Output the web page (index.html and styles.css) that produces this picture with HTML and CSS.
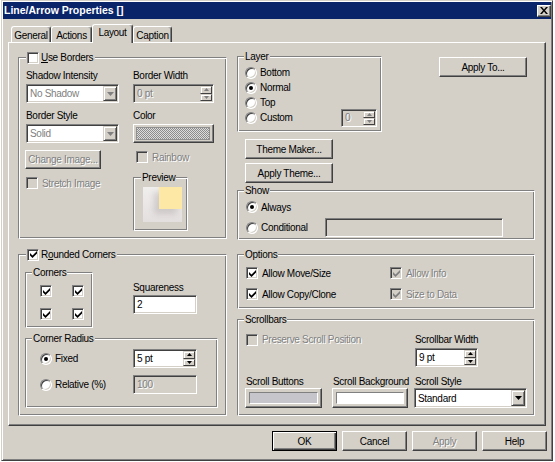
FILE: index.html
```html
<!DOCTYPE html>
<html>
<head>
<meta charset="utf-8">
<link rel="stylesheet" href="styles.css">
</head>
<body>
<div class="dialog">
  <div class="titlebar">
    <span class="title">Line/Arrow Properties []</span>
    <span class="close"><svg width="8" height="7" viewBox="0 0 8 7"><path d="M0 0h2l2 2.4L6 0h2L5 3.5 8 7H6L4 4.6 2 7H0l3-3.5z"/></svg></span>
  </div>
  <div class="tabs">
    <div class="tab tab-general">General</div>
    <div class="tab tab-actions">Actions</div>
    <div class="tab tab-layout sel">Layout</div>
    <div class="tab tab-caption">Caption</div>
  </div>
  <div class="panel">
    <div class="col-left">
      <div class="group g-borders">
        <div class="legend legend-chk"><span class="chk"></span><span><u>U</u>se Borders</span></div>
        <div class="gb-col1">
          <div class="lbl">Shadow Intensity</div>
          <div class="field combo w93 mt2 dis"><span class="val">No Shadow</span><span class="dd"><svg width="7" height="4" viewBox="0 0 7 4"><path d="M0 0h7L3.5 4z"/></svg></span></div>
          <div class="lbl mt6">Border Style</div>
          <div class="field combo w93 mt2 dis"><span class="val">Solid</span><span class="dd"><svg width="7" height="4" viewBox="0 0 7 4"><path d="M0 0h7L3.5 4z"/></svg></span></div>
          <div class="btn btn-change dis">Change Image...</div>
          <div class="cbrow cb-stretch dis"><span class="chk"></span>Stretch Image</div>
        </div>
        <div class="gb-col2">
          <div class="lbl">Border Width</div>
          <div class="field gray w81 mt2 dis"><span class="val">0 pt</span><span class="spinbtns"><span class="sb"><svg width="5" height="3" viewBox="0 0 5 3"><path d="M2.5 0L5 3H0z"/></svg></span><span class="sb"><svg width="5" height="3" viewBox="0 0 5 3"><path d="M0 0h5L2.5 3z"/></svg></span></span></div>
          <div class="lbl mt6">Color</div>
          <div class="btn colorbtn mt2"><span class="hatch"></span></div>
          <div class="cbrow cb-rainbow dis"><span class="chk"></span>Rainbow</div>
          <div class="group g-preview">
            <div class="legend">Preview</div>
            <div class="pv"><div class="pv-fill"></div></div>
          </div>
        </div>
      </div>

      <div class="group g-rounded">
        <div class="legend legend-chk"><span class="chk"><svg width="7" height="7" viewBox="0 0 7 7"><path d="M0 2l2.5 2.5L7 0v2.5L2.5 7 0 4.5z"/></svg></span><span>R<u>o</u>unded Corners</span></div>
        <div class="rc-top">
          <div class="group g-corners">
            <div class="legend">Corners</div>
            <div class="corner-grid">
              <span class="chk"><svg width="7" height="7" viewBox="0 0 7 7"><path d="M0 2l2.5 2.5L7 0v2.5L2.5 7 0 4.5z"/></svg></span>
              <span class="chk"><svg width="7" height="7" viewBox="0 0 7 7"><path d="M0 2l2.5 2.5L7 0v2.5L2.5 7 0 4.5z"/></svg></span>
              <span class="chk"><svg width="7" height="7" viewBox="0 0 7 7"><path d="M0 2l2.5 2.5L7 0v2.5L2.5 7 0 4.5z"/></svg></span>
              <span class="chk"><svg width="7" height="7" viewBox="0 0 7 7"><path d="M0 2l2.5 2.5L7 0v2.5L2.5 7 0 4.5z"/></svg></span>
            </div>
          </div>
          <div class="sq">
            <div class="lbl">Squareness</div>
            <div class="field w64 mt1"><span class="val">2</span></div>
          </div>
        </div>
        <div class="group g-radius">
          <div class="legend">Corner Radius</div>
          <div class="radius-grid">
            <div class="rrow"><span class="radio on"></span>Fixed</div>
            <div class="field w64"><span class="val">5 pt</span><span class="spinbtns"><span class="sb"><svg width="5" height="3" viewBox="0 0 5 3"><path d="M2.5 0L5 3H0z"/></svg></span><span class="sb"><svg width="5" height="3" viewBox="0 0 5 3"><path d="M0 0h5L2.5 3z"/></svg></span></span></div>
            <div class="rrow"><span class="radio"></span>Relative (%)</div>
            <div class="field gray w64 dis"><span class="val">100</span></div>
          </div>
        </div>
      </div>
    </div>

    <div class="col-right">
      <div class="rt-row">
        <div class="group g-layer">
          <div class="legend">Layer</div>
          <div class="rrow lrow"><span class="radio"></span>Bottom</div>
          <div class="rrow lrow"><span class="radio on"></span>Normal</div>
          <div class="rrow lrow"><span class="radio"></span>Top</div>
          <div class="rrow lrow"><span class="radio"></span><span class="lbl-custom">Custom</span>
            <div class="field gray w36 spin-custom dis"><span class="val">0</span><span class="spinbtns"><span class="sb"><svg width="5" height="3" viewBox="0 0 5 3"><path d="M2.5 0L5 3H0z"/></svg></span><span class="sb"><svg width="5" height="3" viewBox="0 0 5 3"><path d="M0 0h5L2.5 3z"/></svg></span></span></div>
          </div>
        </div>
        <div class="btn btn-applyto">Apply To...</div>
      </div>
      <div class="btn btn-theme mt7">Theme Maker...</div>
      <div class="btn btn-theme mt4">Apply Theme...</div>

      <div class="group g-show">
        <div class="legend">Show</div>
        <div class="rrow srow1"><span class="radio on"></span>Always</div>
        <div class="rrow srow2"><span class="radio"></span><span class="lbl-cond">Conditional</span><div class="field gray w178"></div></div>
      </div>

      <div class="group g-options">
        <div class="legend">Options</div>
        <div class="opt-grid">
          <div class="cbrow"><span class="chk"><svg width="7" height="7" viewBox="0 0 7 7"><path d="M0 2l2.5 2.5L7 0v2.5L2.5 7 0 4.5z"/></svg></span>Allow Move/Size</div>
          <div class="cbrow dis"><span class="chk"><svg width="7" height="7" viewBox="0 0 7 7"><path d="M0 2l2.5 2.5L7 0v2.5L2.5 7 0 4.5z"/></svg></span>Allow Info</div>
          <div class="cbrow"><span class="chk"><svg width="7" height="7" viewBox="0 0 7 7"><path d="M0 2l2.5 2.5L7 0v2.5L2.5 7 0 4.5z"/></svg></span>Allow Copy/Clone</div>
          <div class="cbrow dis"><span class="chk"><svg width="7" height="7" viewBox="0 0 7 7"><path d="M0 2l2.5 2.5L7 0v2.5L2.5 7 0 4.5z"/></svg></span>Size to Data</div>
        </div>
      </div>

      <div class="group g-scroll">
        <div class="legend">Scrollbars</div>
        <div class="sc-top">
          <div class="cbrow cb-preserve dis"><span class="chk"></span>Preserve Scroll Position</div>
          <div class="sc-width">
            <div class="lbl">Scrollbar Width</div>
            <div class="field w63 mt2"><span class="val">9 pt</span><span class="spinbtns"><span class="sb"><svg width="5" height="3" viewBox="0 0 5 3"><path d="M2.5 0L5 3H0z"/></svg></span><span class="sb"><svg width="5" height="3" viewBox="0 0 5 3"><path d="M0 0h5L2.5 3z"/></svg></span></span></div>
          </div>
        </div>
        <div class="sc-grid">
          <div class="lbl sc-lbl">Scroll Buttons</div>
          <div class="lbl sc-lbl">Scroll Background</div>
          <div class="lbl sc-lbl">Scroll Style</div>
          <div class="btn swatchbtn w77"><span class="swatch swatch-grey"></span></div>
          <div class="btn swatchbtn w76"><span class="swatch swatch-white"></span></div>
          <div class="field combo combo-style"><span class="val">Standard</span><span class="dd"><svg width="7" height="4" viewBox="0 0 7 4"><path d="M0 0h7L3.5 4z"/></svg></span></div>
        </div>
      </div>
    </div>
  </div>
  <div class="buttons">
    <div class="btn dlgbtn def">OK</div>
    <div class="btn dlgbtn">Cancel</div>
    <div class="btn dlgbtn dis">Apply</div>
    <div class="btn dlgbtn">Help</div>
  </div>
</div>
</body>
</html>
```

FILE: styles.css
```css
* { box-sizing: border-box; }
html, body { margin: 0; padding: 0; }
body {
  background: #fff;
  font-family: "Liberation Sans", Arial, sans-serif;
  font-size: 10px;
  letter-spacing: -0.3px;
  line-height: 13px;
  color: #000;
}
svg { display: block; fill: #000; }

.dialog {
  margin-left: 1px;
  width: 552px;
  height: 461px;
  background: #d4d0c8;
  border: 1px solid;
  border-color: #d4d0c8 #404040 #404040 #d4d0c8;
  box-shadow: inset 1px 1px #fff, inset -1px -1px #808080;
  padding: 1px;
}

/* title bar */
.titlebar {
  height: 17px;
  background: #0a246a;
  display: flex;
  align-items: center;
  justify-content: space-between;
  padding-left: 1px;
}
.title {
  color: #fff;
  font-weight: bold;
  font-size: 10.5px;
  letter-spacing: 0;
}
.close {
  width: 14px;
  height: 12px;
  background: #d4d0c8;
  border: 1px solid;
  border-color: #fff #404040 #404040 #fff;
  box-shadow: inset -1px -1px #808080;
  display: flex;
  align-items: center;
  justify-content: center;
}

/* tabs */
.tabs {
  height: 23px;
  display: flex;
  align-items: flex-end;
  padding-left: 8px;
  position: relative;
  z-index: 1;
}
.tab {
  height: 16px;
  border: 1px solid;
  border-bottom: 0;
  border-color: #fff #404040 #fff #fff;
  box-shadow: inset -1px 0 #808080;
  border-radius: 3px 3px 0 0;
  display: flex;
  align-items: center;
  justify-content: center;
  padding-top: 1px;
}
.tab.sel {
  height: 19px;
  margin-bottom: -1px;
  background: #d4d0c8;
  padding: 0 0 3px;
}
.tab-general { width: 40px; }
.tab-actions { width: 41px; }
.tab-layout { width: 41px; }
.tab-caption { width: 39px; }

/* panel */
.panel {
  margin-left: 5px;
  width: 538px;
  height: 384px;
  border: 1px solid;
  border-color: #fff #404040 #404040 #fff;
  box-shadow: inset -1px -1px #808080;
  padding: 14px 0 0 9px;
  display: flex;
  gap: 10px;
}
.col-left { width: 209px; flex: none; }
.col-right { width: 298px; flex: none; }

/* common */
.lbl { height: 13px; white-space: nowrap; }
.dis { color: #808080; text-shadow: 1px 1px #fff; }
.dis svg { fill: #808080; }
.mt1 { margin-top: 1px; }
.mt2 { margin-top: 2px; }
.mt4 { margin-top: 4px; }
.mt6 { margin-top: 6px; }
.mt7 { margin-top: 7px; }

.group {
  position: relative;
  border: 1px solid;
  border-color: #808080 #fff #fff #808080;
  box-shadow: inset 1px 1px #fff, inset -1px -1px #808080;
}
.legend {
  position: absolute;
  top: -7px;
  left: 6px;
  height: 13px;
  padding: 0 1px;
  background: #d4d0c8;
  display: flex;
  align-items: center;
  gap: 1px;
  white-space: nowrap;
}
.legend-chk { left: 7px; padding: 0 2px 0 1px; gap: 2px; }

.btn {
  height: 20px;
  background: #d4d0c8;
  border: 1px solid;
  border-color: #fff #404040 #404040 #fff;
  box-shadow: inset -1px -1px #808080;
  display: flex;
  align-items: center;
  justify-content: center;
  white-space: nowrap;
}
.btn.def {
  border-color: #000;
  box-shadow: inset 1px 1px #fff, inset -1px -1px #404040, inset -2px -2px #808080;
}

.chk {
  flex: none;
  width: 12px;
  height: 12px;
  background: #fff;
  border: 1px solid;
  border-color: #808080 #fff #fff #808080;
  box-shadow: inset 1px 1px #404040, inset -1px -1px #d4d0c8;
  display: flex;
  align-items: center;
  justify-content: center;
}
.dis .chk { background: #d4d0c8; }
.cbrow {
  display: flex;
  align-items: center;
  gap: 4px;
  height: 12px;
  white-space: nowrap;
}

.radio {
  flex: none;
  width: 12px;
  height: 12px;
  border-radius: 50%;
  background: #fff;
  border: 1px solid;
  border-color: #808080 #fff #fff #808080;
  box-shadow: inset 1px 1px #404040, inset -1px -1px #d4d0c8;
  display: flex;
  align-items: center;
  justify-content: center;
}
.radio.on::after {
  content: "";
  width: 4px;
  height: 4px;
  border-radius: 50%;
  background: #000;
}
.rrow {
  display: flex;
  align-items: center;
  gap: 3px;
  white-space: nowrap;
}

.field {
  height: 19px;
  background: #fff;
  border: 1px solid;
  border-color: #808080 #fff #fff #808080;
  box-shadow: inset 1px 1px #404040, inset -1px -1px #d4d0c8;
  padding: 1px;
  display: flex;
  align-items: stretch;
}
.field.gray { background: #d4d0c8; }
.field .val {
  flex: 1;
  padding-left: 2px;
  display: flex;
  align-items: center;
  overflow: hidden;
  white-space: nowrap;
}
.dd {
  flex: none;
  width: 14px;
  background: #d4d0c8;
  border: 1px solid;
  border-color: #d4d0c8 #404040 #404040 #d4d0c8;
  box-shadow: inset 1px 1px #fff, inset -1px -1px #808080;
  display: flex;
  align-items: center;
  justify-content: center;
}
.spinbtns {
  flex: none;
  width: 12px;
  display: flex;
  flex-direction: column;
}
.sb {
  flex: 1;
  background: #d4d0c8;
  border: 1px solid;
  border-color: #d4d0c8 #404040 #404040 #d4d0c8;
  box-shadow: inset 1px 1px #fff;
  display: flex;
  align-items: center;
  justify-content: center;
}

.w36 { width: 36px; }
.w63 { width: 63px; }
.w64 { width: 64px; }
.w76 { width: 76px; }
.w77 { width: 77px; }
.w81 { width: 81px; }
.w93 { width: 93px; }
.w178 { width: 178px; }

/* Use Borders group */
.g-borders {
  height: 182px;
  padding: 11px 0 0 7px;
  display: flex;
}
.gb-col1 { width: 107px; flex: none; }
.gb-col2 { width: 81px; flex: none; }
.btn-change { margin: 7px 0 0 -1px; width: 76px; height: 19px; }
.cb-stretch { margin-top: 8px; }
.colorbtn { height: 19px; padding: 2px 3px 2px 2px; align-items: stretch; }
.hatch {
  flex: 1;
  border: 1px solid #909090;
  background: repeating-conic-gradient(#8c8c8c 0 25%, #dcdcdc 0 50%) 0 0 / 2px 2px;
}
.cb-rainbow { margin: 8px 0 0 3px; }
.g-preview {
  margin-top: 14px;
  width: 55px;
  height: 54px;
  padding: 9px 0 0 9px;
}
.g-preview .legend { left: 7px; }
.pv {
  width: 39px;
  height: 35px;
  background: linear-gradient(to bottom, #f1eeee, #e3dfde);
}
.pv-fill {
  margin-left: 16px;
  width: 23px;
  height: 22px;
  background: #fee8a6;
  box-shadow: -5px 5px 6px rgba(90, 80, 80, 0.18);
}

/* Rounded corners group */
.g-rounded {
  margin-top: 15px;
  height: 162px;
  padding: 17px 0 0 6px;
}
.rc-top { display: flex; }
.g-corners {
  width: 68px;
  height: 56px;
  padding: 12px 0 0 14px;
}
.corner-grid {
  display: grid;
  grid-template-columns: 12px 12px;
  grid-auto-rows: 12px;
  column-gap: 20px;
  row-gap: 11px;
}
.sq { margin: 9px 0 0 40px; }
.g-radius {
  margin-top: 10px;
  width: 193px;
  height: 70px;
  padding: 10px 0 0 14px;
}
.radius-grid {
  display: grid;
  grid-template-columns: 93px 64px;
  grid-auto-rows: 19px;
  row-gap: 7px;
  align-items: center;
}

/* right column */
.rt-row { display: flex; align-items: flex-start; }
.g-layer {
  margin-top: -1px;
  width: 145px;
  height: 76px;
  padding: 8px 0 0 7px;
  display: flex;
  flex-direction: column;
}
.lrow { height: 15px; }
.lbl-custom { width: 78px; }
.spin-custom { height: 18px; }
.btn-applyto { margin-left: 57px; width: 88px; }
.btn-theme { margin-left: 8px; width: 88px; }

.g-show {
  margin-top: 7px;
  height: 50px;
  padding: 9px 0 0 8px;
}
.srow1 { height: 14px; }
.srow2 { margin-top: 4px; height: 19px; }
.lbl-cond { width: 61px; }

.g-options {
  margin-top: 14px;
  height: 55px;
  padding: 12px 0 0 8px;
}
.opt-grid {
  display: grid;
  grid-template-columns: 144px auto;
  grid-auto-rows: 12px;
  row-gap: 9px;
}

.g-scroll {
  margin-top: 10px;
  height: 97px;
  padding: 13px 0 0 8px;
}
.sc-top { display: flex; align-items: flex-start; }
.cb-preserve { width: 169px; height: 13px; }
.sc-grid {
  margin: 8px 0 0 -1px;
  display: grid;
  grid-template-columns: 87px 82px 113px;
  grid-template-rows: 13px 20px;
}
.sc-lbl { padding-left: 1px; }
.swatchbtn { padding: 3px; align-items: stretch; }
.swatch { flex: 1; border: 1px solid; border-color: #808080 #fff #fff #808080; }
.swatch-grey { background: #c6c5cb; }
.swatch-white { background: #fff; }
.combo-style { width: 113px; height: 20px; }

/* bottom buttons */
.buttons {
  display: flex;
  justify-content: flex-end;
  gap: 5px;
  margin-top: 5px;
  padding-right: 4px;
}
.dlgbtn { width: 65px; }
```
